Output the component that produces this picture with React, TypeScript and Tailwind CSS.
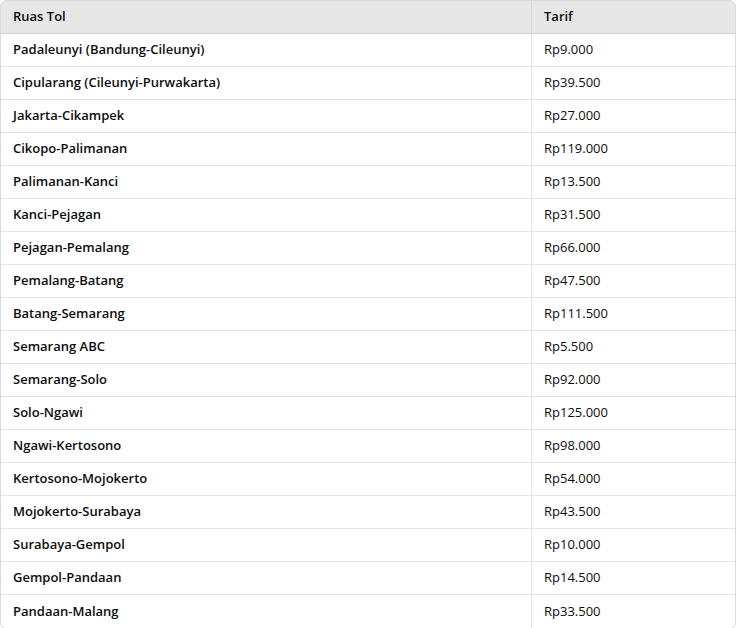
const rows: [string, string][] = [
  ["Padaleunyi (Bandung-Cileunyi)", "Rp9.000"],
  ["Cipularang (Cileunyi-Purwakarta)", "Rp39.500"],
  ["Jakarta-Cikampek", "Rp27.000"],
  ["Cikopo-Palimanan", "Rp119.000"],
  ["Palimanan-Kanci", "Rp13.500"],
  ["Kanci-Pejagan", "Rp31.500"],
  ["Pejagan-Pemalang", "Rp66.000"],
  ["Pemalang-Batang", "Rp47.500"],
  ["Batang-Semarang", "Rp111.500"],
  ["Semarang ABC", "Rp5.500"],
  ["Semarang-Solo", "Rp92.000"],
  ["Solo-Ngawi", "Rp125.000"],
  ["Ngawi-Kertosono", "Rp98.000"],
  ["Kertosono-Mojokerto", "Rp54.000"],
  ["Mojokerto-Surabaya", "Rp43.500"],
  ["Surabaya-Gempol", "Rp10.000"],
  ["Gempol-Pandaan", "Rp14.500"],
  ["Pandaan-Malang", "Rp33.500"],
];

export default function App() {
  return (
    <div className="bg-white w-[737px] h-[628px]" style={{ fontFamily: '"Open Sans", "Noto Sans", sans-serif' }}>
      <div className="w-[736px] border border-[#d9d9d9] rounded-md overflow-hidden text-[13px] text-[#0d0d0d]">
        <div className="flex h-[33px] bg-[#e6e6e6] border-b border-[#cfcfcf] font-semibold">
          <div className="w-[531px] border-r border-[#d9d9d9] px-3 flex items-center">Ruas Tol</div>
          <div className="flex-1 px-3 flex items-center">Tarif</div>
        </div>
        {rows.map(([a, b], i) => (
          <div key={a} className={`flex h-[33px] ${i < rows.length - 1 ? "border-b border-[#e3e3e3]" : ""}`}>
            <div className="w-[531px] border-r border-[#e3e3e3] px-3 flex items-center font-semibold">{a}</div>
            <div className="flex-1 px-3 flex items-center">{b}</div>
          </div>
        ))}
      </div>
    </div>
  );
}
